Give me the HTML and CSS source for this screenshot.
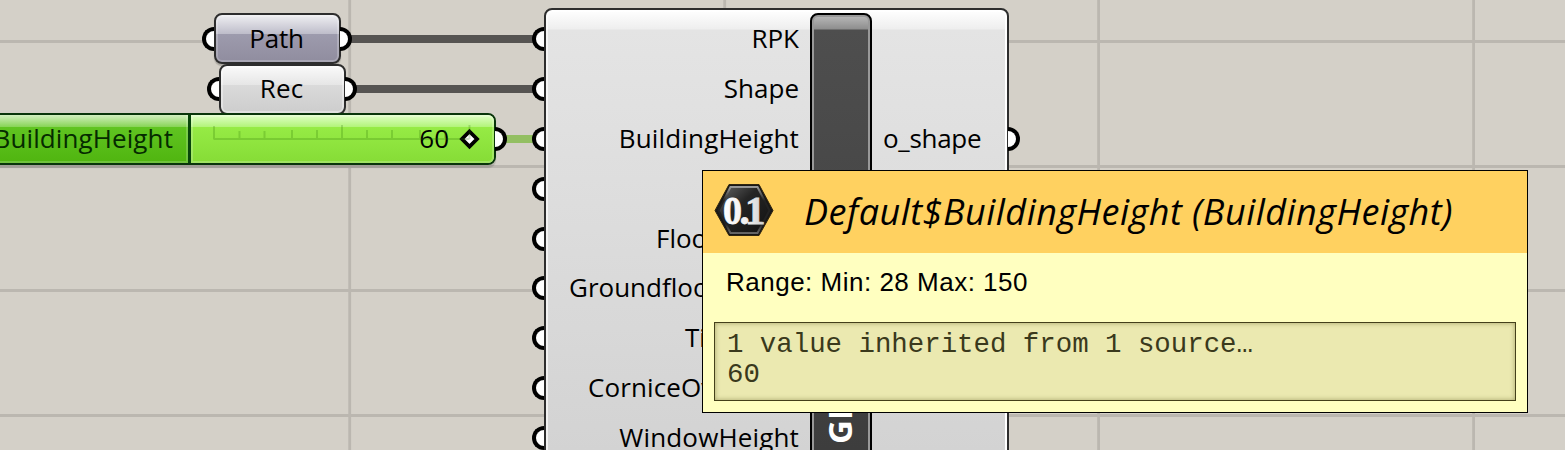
FILE: index.html
```html
<!DOCTYPE html>
<html lang="en">
<head>
<meta charset="utf-8">
<title>Node canvas</title>
<link rel="stylesheet" href="styles.css">
</head>
<body>
<main class="canvas">
  <svg class="backdrop" width="1565" height="450" viewBox="0 0 1565 450" aria-hidden="true">
    <path class="grid" d="M349.7 0V450M724.7 0V450M1098.6 0V450M1473.6 0V450M0 41.5H1565M0 166.5H1565M0 290.5H1565M0 415.5H1565"/>
    <path class="wire" d="M350 39H536M355 89H536"/>
    <path class="wire wire-green" d="M504 139H536"/>
  </svg>

  <section class="node path"><i class="port in"></i><span>Path</span><i class="port out"></i></section>
  <section class="node rec"><i class="port in"></i><span>Rec</span><i class="port out"></i></section>

  <section class="node slider">
    <div class="slider-name"><span>BuildingHeight</span></div>
    <div class="slider-track">
      <svg class="ticks" width="300" height="48" viewBox="0 0 300 48" aria-hidden="true">
        <path d="M23 11V24.500M48.500 16V24M73.500 16V24M101 15V24M126 15V24M151 10V24M176 15V24M201 15V24M229 15V24M254 15V24M278.500 10V24M23 24H278.500"/>
      </svg>
      <span class="value">60</span>
      <svg class="grip" width="20" height="20" viewBox="0 0 20 20" aria-hidden="true"><path d="M9.500 2.500L17 10L9.500 17.500L2 10Z"/></svg>
    </div>
    <i class="port out"></i>
  </section>

  <section class="node component">
    <ul class="inputs">
      <li><i class="port in"></i><span>RPK</span></li>
      <li><i class="port in"></i><span>Shape</span></li>
      <li><i class="port in"></i><span class="wide">BuildingHeight</span></li>
      <li><i class="port in"></i></li>
      <li class="covered"><i class="port in"></i><span class="floor">Floo</span></li>
      <li class="covered"><i class="port in"></i><span class="groundfloor">Groundfloo</span></li>
      <li class="covered"><i class="port in"></i><span class="tile">Ti</span></li>
      <li class="covered"><i class="port in"></i><span class="cornice">CorniceOv</span></li>
      <li><i class="port in"></i><span class="wide">WindowHeight</span></li>
    </ul>
    <div class="spine"><span>GI</span></div>
    <div class="outputs"><span>o_shape</span><i class="port out"></i></div>
  </section>

  <aside class="tooltip">
    <header class="tip-head">
      <svg class="tip-icon" width="60" height="54" viewBox="0 0 60 54" aria-hidden="true">
        <defs>
          <linearGradient id="rim" x2="0" y2="1"><stop offset="0" stop-color="#999"/><stop offset=".3" stop-color="#222"/><stop offset=".8" stop-color="#222"/><stop offset="1" stop-color="#666"/></linearGradient>
          <linearGradient id="face" x2="1" y2="1"><stop offset="0" stop-color="#666"/><stop offset=".4" stop-color="#252525"/><stop offset="1" stop-color="#111"/></linearGradient>
          <linearGradient id="digit" x2="1" y2="0"><stop offset="0" stop-color="#fff"/><stop offset=".6" stop-color="#eee"/><stop offset="1" stop-color="#ccc"/></linearGradient>
        </defs>
        <path d="M15 1.500H45L59 27.500L45 52.500H15L1 27.500Z" fill="#171717" stroke="#30250f" stroke-linejoin="round"/>
        <path d="M16.500 4H43.500L55.500 27.500L43.500 50H16.500L4.500 27.500Z" fill="url(#face)" stroke="url(#rim)" stroke-width="2"/>
        <text x="9" y="40.500" fill="url(#digit)" stroke="url(#digit)" stroke-width=".8"><tspan textLength="19" lengthAdjust="spacingAndGlyphs">0</tspan><tspan x="25.500">.</tspan><tspan x="31">1</tspan></text>
      </svg>
      <h1>Default$BuildingHeight (BuildingHeight)</h1>
    </header>
    <p class="range">Range: Min: 28 Max: 150</p>
    <div class="data"><div>1 value inherited from 1 source…</div><div>60</div></div>
  </aside>
</main>
</body>
</html>
```
FILE: styles.css
```css
* { box-sizing: border-box; }
body { margin: 0; }
.canvas {
  position: relative;
  width: 1565px;
  height: 450px;
  overflow: hidden;
  background: #d4d0c8;
  color: #000;
  font: 26px/50px "Open Sans", "Noto Sans", sans-serif;
}
.backdrop { display: block; }
.grid { stroke: #bbb7b0; stroke-width: 2.8; fill: none; }
.wire { stroke: #565452; stroke-width: 8; fill: none; }
.wire-green { stroke: #93bf62; }

/* Nodes sit freely on the canvas */
.node {
  position: absolute;
  display: flex;
  border: 2px solid #2d2d2d;
  border-radius: 8px;
}
.port {
  position: absolute;
  top: 50%;
  width: 12px;
  height: 24px;
  margin-top: -12px;
  background: #fff;
  border: 4.5px solid #000;
}
.port.in { left: -14px; border-right: 0; border-radius: 12px 0 0 12px; }
.port.out { right: -13px; border-left: 0; border-radius: 0 12px 12px 0; }

.path, .rec {
  width: 127px;
  height: 51px;
  align-items: center;
  justify-content: center;
  padding: 0 2px 3px 0;
}
.path {
  left: 214px;
  top: 13px;
  padding-bottom: 1px;
  background: linear-gradient(#efeff2, #bebdca 40%, #9d9bad 41%, #908d9f);
  box-shadow: inset 0 0 0 2px #ffffff38, 0 2px 1px #0003;
}
.rec {
  left: 219px;
  top: 63.5px;
  background: linear-gradient(#fafafa, #e6e6e6 40%, #dadada 41%, #cdcdcd);
  box-shadow: inset 0 0 0 2px #ffffff60;
}
.path span { letter-spacing: -.2px; }
.rec span { letter-spacing: .1px; }

.slider {
  left: -30px;
  top: 113px;
  width: 526px;
  height: 52px;
  border-color: #09350a;
  box-shadow: 0 3px 1px #0002;
}
.slider-name, .slider-track {
  display: flex;
  align-items: center;
  height: 48px;
}
.slider-name {
  width: 219px;
  justify-content: flex-end;
  padding: 0 16px 2px 0;
  color: #052b00;
  border-right: 3px solid #07450a;
  background: linear-gradient(#d2efc0, #8ad55a 24%, #60c421 25%, #50b50f);
  box-shadow: inset -2px -2px 0 #ffffff30;
}
.slider-name span { letter-spacing: .1px; margin-right: -1px; }
.slider-track {
  position: relative;
  width: 303px;
  justify-content: flex-end;
  padding-right: 14px;
  gap: 11px;
  border-radius: 0 6px 6px 0;
  background: linear-gradient(#e0ffc8, #b4f47c 24%, #96eb45 25%, #86dc36);
  box-shadow: inset 0 0 0 2px #ffffff38;
}
.ticks { position: absolute; left: 0; top: 0; }
.ticks path { stroke: #246c0038; stroke-width: 2; fill: none; }
.value { padding-bottom: 2px; }
.grip { overflow: visible; }
.grip path { fill: #fff; stroke: #000; stroke-width: 3.8; }

.component {
  left: 544px;
  top: 8px;
  width: 465px;
  height: 540px;
  background: linear-gradient(#fff, #eee 19px, #e4e4e4 20px, #d3d3d3 441px);
  box-shadow: inset 2px 2px 0 #fffa, inset -2px 0 0 #fff;
}
.inputs {
  width: 264px;
  margin: 0;
  padding: 4px 11px 0 0;
  list-style: none;
}
.inputs li {
  position: relative;
  height: 49.9px;
  display: flex;
  justify-content: flex-end;
  align-items: center;
  padding-bottom: 2px;
}
.inputs .port { margin-top: -12px; }
.inputs .wide { letter-spacing: .15px; }
/* Labels that run under the tooltip keep their left edge */
.inputs .covered { justify-content: flex-start; }
.covered span { width: 156px; overflow: hidden; white-space: nowrap; }
.covered .floor { padding-left: 110px; }
.covered .groundfloor { padding-left: 23px; }
.covered .tile { padding-left: 139px; }
.covered .cornice { padding-left: 42px; letter-spacing: .1px; }
.spine {
  position: relative;
  width: 62px;
  margin-top: 3px;
  border: 2.5px solid #000;
  border-radius: 8px 8px 0 0;
  background: linear-gradient(#bbb, #8e8e8e 14px, #4e4e4e 15px, #3d3d3d 435px);
  box-shadow: inset 0 0 0 2px #999;
}
.spine span {
  display: block;
  margin: 349px 0 0 3px;
  height: 80px;
  width: 50px;
  writing-mode: vertical-rl;
  transform: rotate(180deg);
  font-weight: 700;
  font-size: 33px;
  color: #fff;
}
.outputs {
  position: relative;
  width: 135px;
  height: 50px;
  margin-top: 104px;
  padding-left: 11px;
  letter-spacing: -.3px;
  line-height: 48px;
}

.tooltip {
  position: absolute;
  left: 702px;
  top: 170px;
  width: 826px;
  height: 243px;
  border: 1px solid #000;
  background: #ffffc0;
}
.tip-head {
  display: flex;
  height: 82px;
  padding: 0 0 0 11px;
  background: #ffd160;
}
.tip-icon { margin-top: 12px; flex: none; }
.tip-icon text { font: bold 41px "Liberation Serif", serif; }
.tip-head h1 {
  margin: 0 0 0 30px;
  font: italic 400 36px/82px "Open Sans", "Noto Sans", sans-serif;
  letter-spacing: .48px;
  white-space: nowrap;
}
.range {
  margin: 0;
  padding: 14px 0 0 23px;
  font: 26px/30px "Liberation Sans", Arial, sans-serif;
  letter-spacing: .5px;
}
.data {
  width: 802px;
  height: 79px;
  margin: 25px 0 0 11px;
  padding: 7px 12px 0;
  border: 1px solid #44401a;
  background: #ebe9b0;
  box-shadow: inset 0 0 5px #77753b99;
  color: #3a391c;
  font: 27.4px/30px "Liberation Mono", "Courier New", monospace;
}
```
